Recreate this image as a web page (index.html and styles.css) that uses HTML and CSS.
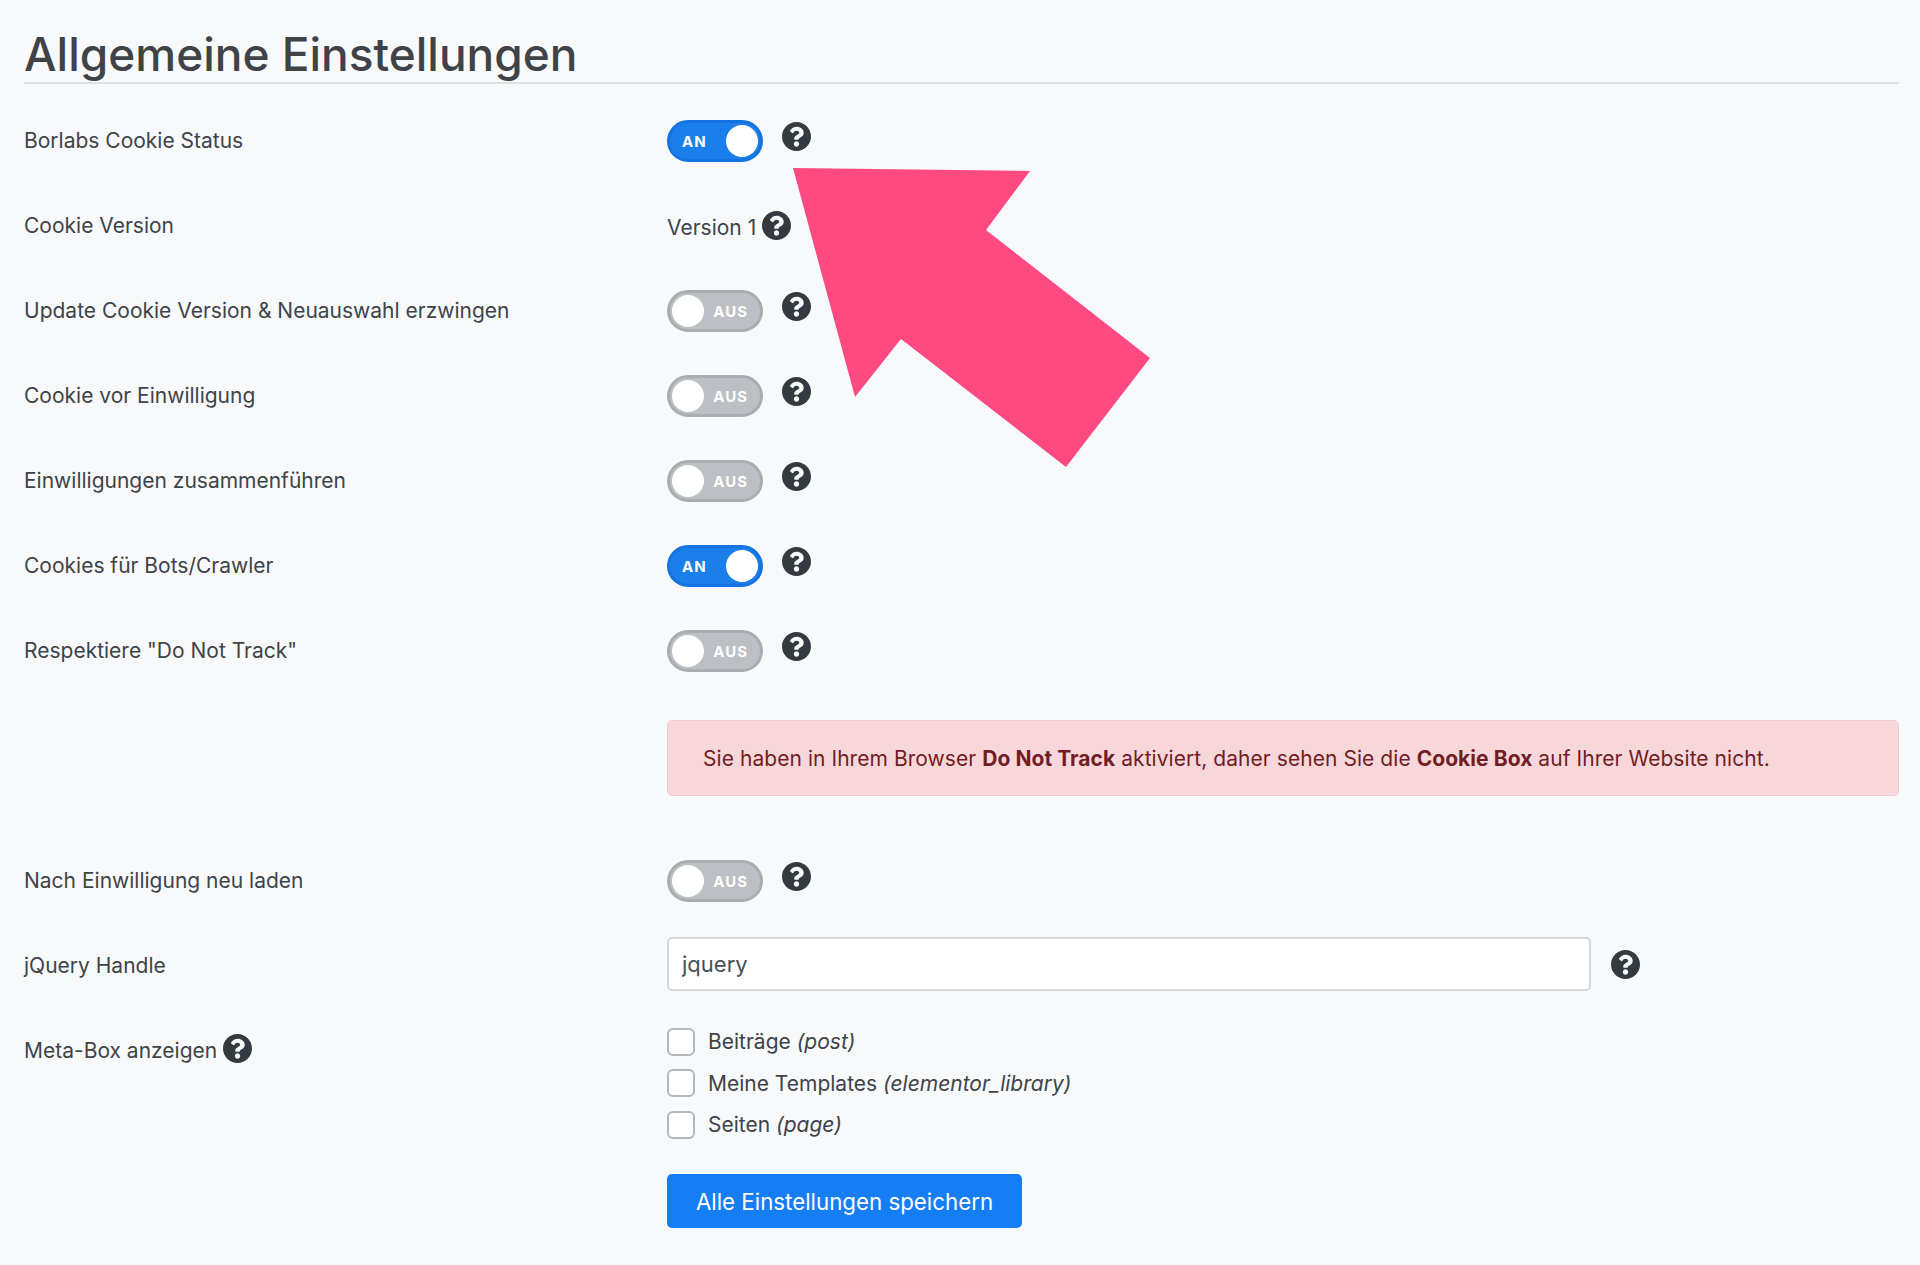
FILE: index.html
```html
<!DOCTYPE html>
<html lang="de">
<head>
<meta charset="utf-8">
<title>Allgemeine Einstellungen</title>
<link rel="stylesheet" href="styles.css">
</head>
<body>
<svg class="defs" width="0" height="0" aria-hidden="true"><symbol id="q" viewBox="8 8 496 496"><path d="M504 256c0 136.997-111.043 248-248 248S8 392.997 8 256C8 119.083 119.043 8 256 8s248 111.083 248 248zM262.655 90c-54.497 0-89.255 22.957-116.549 63.758-3.536 5.286-2.353 12.415 2.715 16.258l34.699 26.31c5.205 3.947 12.621 3.008 16.665-2.122 17.864-22.658 30.113-35.797 57.303-35.797 20.429 0 45.698 13.148 45.698 32.958 0 14.976-12.363 22.667-32.534 33.976C247.128 238.528 216 254.941 216 296v4c0 6.627 5.373 12 12 12h56c6.627 0 12-5.373 12-12v-1.333c0-28.462 83.186-29.647 83.186-106.667 0-58.002-60.165-102-116.531-102zM256 338c-25.365 0-46 20.635-46 46 0 25.364 20.635 46 46 46s46-20.636 46-46c0-25.365-20.635-46-46-46z"/></symbol></svg>
<main class="page">
  <h1 class="title">Allgemeine Einstellungen</h1>
  <div class="row"><div class="label">Borlabs Cookie Status</div><div class="field"><span class="toggle on"><span class="toggle-text">AN</span><span class="knob"></span></span><svg class="help"><use href="#q"/></svg></div></div>
  <div class="row"><div class="label">Cookie Version</div><div class="field version"><span class="version-text">Version 1</span><svg class="help tight"><use href="#q"/></svg></div></div>
  <div class="row"><div class="label">Update Cookie Version &amp; Neuauswahl erzwingen</div><div class="field"><span class="toggle off"><span class="knob"></span><span class="toggle-text">AUS</span></span><svg class="help"><use href="#q"/></svg></div></div>
  <div class="row"><div class="label">Cookie vor Einwilligung</div><div class="field"><span class="toggle off"><span class="knob"></span><span class="toggle-text">AUS</span></span><svg class="help"><use href="#q"/></svg></div></div>
  <div class="row"><div class="label">Einwilligungen zusammenführen</div><div class="field"><span class="toggle off"><span class="knob"></span><span class="toggle-text">AUS</span></span><svg class="help"><use href="#q"/></svg></div></div>
  <div class="row"><div class="label">Cookies für Bots/Crawler</div><div class="field"><span class="toggle on"><span class="toggle-text">AN</span><span class="knob"></span></span><svg class="help"><use href="#q"/></svg></div></div>
  <div class="row"><div class="label">Respektiere "Do Not Track"</div><div class="field"><span class="toggle off"><span class="knob"></span><span class="toggle-text">AUS</span></span><svg class="help"><use href="#q"/></svg></div></div>
  <div class="alert">Sie haben in Ihrem Browser <b>Do Not Track</b> aktiviert, daher sehen Sie die <b>Cookie Box</b> auf Ihrer Website nicht.</div>
  <div class="row"><div class="label">Nach Einwilligung neu laden</div><div class="field"><span class="toggle off"><span class="knob"></span><span class="toggle-text">AUS</span></span><svg class="help"><use href="#q"/></svg></div></div>
  <div class="row"><div class="label">jQuery Handle</div><div class="field"><input class="input" type="text" value="jquery"><svg class="help input-help"><use href="#q"/></svg></div></div>
  <div class="row top"><div class="label">Meta-Box anzeigen<svg class="help tight"><use href="#q"/></svg></div>
    <div class="checks">
      <label class="check"><span class="box"></span>Beiträge&nbsp;<i>(post)</i></label>
      <label class="check"><span class="box"></span>Meine Templates&nbsp;<i>(elementor_library)</i></label>
      <label class="check"><span class="box"></span>Seiten&nbsp;<i>(page)</i></label>
      <button class="save" type="button">Alle Einstellungen speichern</button>
    </div>
  </div>
</main>
<svg class="arrow" viewBox="0 0 1920 1265" aria-hidden="true"><polygon points="793,168 1030,171 986,230 1150,358 1066,467 901,339 855,397"/></svg>
</body>
</html>
```
FILE: styles.css
```css
* { box-sizing: border-box; }
html, body { margin: 0; height: 1265px; overflow: hidden; }
body {
  background: #f8f9fb;
  color: #3f4348;
  font-family: Inter, "Liberation Sans", sans-serif;
  font-size: 21px;
  position: relative;
}
.defs { position: absolute; }
.page { padding: 0 21px 0 24px; }
.title {
  margin: 0 0 14px;
  height: 84px;
  padding-top: 25px;
  font-size: 46px;
  line-height: 58px;
  font-weight: 500;
  color: #3f4348;
  border-bottom: 2px solid #dfe1e3;
}
.row {
  display: grid;
  grid-template-columns: 643px 1fr;
  height: 85px;
  align-items: center;
}
.label { display: flex; align-items: center; gap: 6px; }
.field { display: flex; align-items: center; }
.version { padding-top: 3px; }
.version-text { margin-right: 6px; }
.toggle {
  width: 96px;
  height: 42px;
  border-radius: 21px;
  border: 3px solid;
  display: flex;
  align-items: center;
  justify-content: space-between;
  font-size: 15px;
  font-weight: 700;
  letter-spacing: 1px;
  color: #fff;
}
.toggle.on { background: #1a7fea; border-color: #1473e0; padding: 0 2px 0 12px; }
.toggle.off { background: #bcbfc4; border-color: #a9adb2; padding: 0 12px 0 2px; }
.toggle-text { margin-top: 2px; }
.knob { width: 32px; height: 32px; border-radius: 50%; background: #fff; }
.help { width: 29px; height: 29px; fill: #343a40; margin: -9px 0 0 19px; flex: none; }
.help.tight { margin: -3px 0 0 0; }
.help.input-help { margin: -2px 0 0 20px; }
.alert {
  margin: 27px 0 42px 643px;
  height: 76px;
  padding: 0 35px;
  display: flex;
  align-items: center;
  white-space: pre-wrap;
  letter-spacing: 0.055px;
  background: #f8d7da;
  border: 1px solid #f3c9ce;
  border-radius: 5px;
  color: #721c24;
}
.input {
  width: 924px;
  height: 54px;
  padding: 0 13px;
  margin-top: -3px;
  font: inherit;
  font-size: 22px;
  color: #495057;
  background: #fff;
  border: 2px solid #d5d8db;
  border-radius: 5px;
}
.top { align-items: start; height: auto; }
.top .label { padding: 29px 0 0; }
.checks { padding-top: 13px; display: flex; flex-direction: column; align-items: flex-start; }
.check { display: flex; align-items: center; height: 41.6px; }
.box {
  width: 28px;
  height: 28px;
  margin-right: 13px;
  background: #fff;
  border: 2px solid #b4b7bb;
  border-radius: 6px;
}
.save {
  margin-top: 28px;
  width: 355px;
  height: 54px;
  padding: 2px 0 0;
  font: inherit;
  font-size: 22.3px;
  color: #fff;
  background: #167ef5;
  border: 0;
  border-radius: 5px;
}
.arrow { position: absolute; left: 0; top: 0; width: 1920px; height: 1265px; fill: #fe4a80; pointer-events: none; }
```
